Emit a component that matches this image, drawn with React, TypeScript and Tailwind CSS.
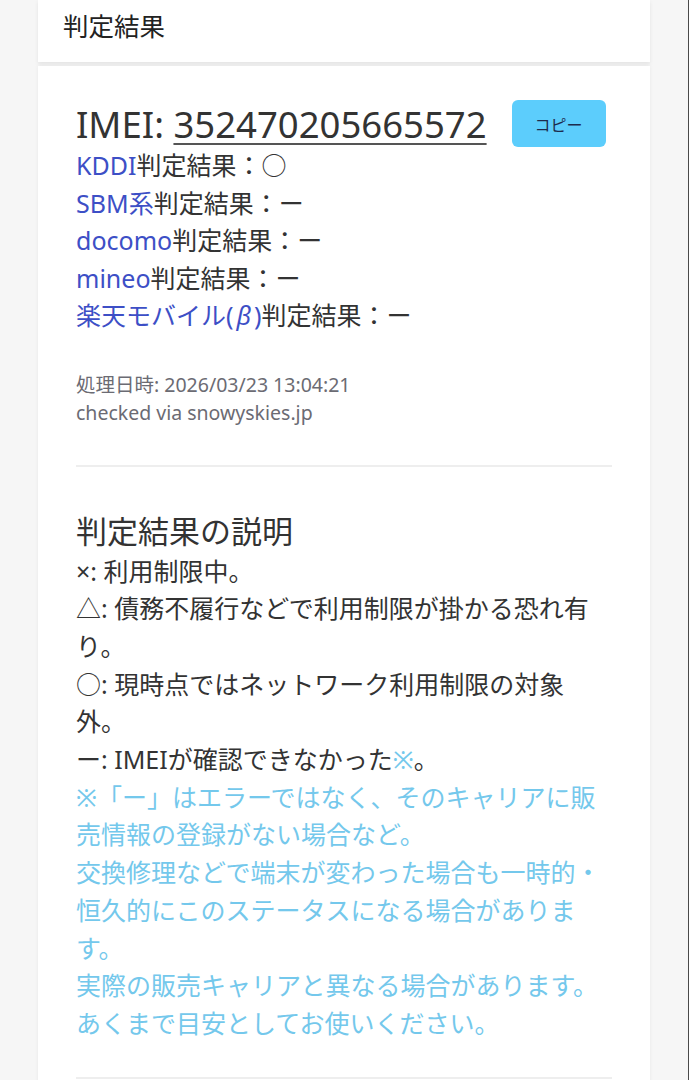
import React from "react";

const carriers = ["KDDI", "SBM系", "docomo", "mineo"];
const results = ["○", "ー", "ー", "ー"];

export default function App() {
  return (
    <div className="min-h-screen w-full bg-[#f6f6f6] border-r border-[#4a4a4a] font-['Noto_Sans','Noto_Sans_CJK_JP',sans-serif] text-[#333]">
      <div className="mx-[38px] flex flex-col gap-[4px]">
        <div className="h-[62px] bg-white shadow-[0_2px_4px_rgba(0,0,0,0.08)] pl-[25px] pt-[7px]">
          <h1 className="text-[25.5px] leading-[36px] font-['Noto_Sans_CJK_JP',sans-serif] font-normal text-[#222]">判定結果</h1>
        </div>
        <div className="bg-white shadow-[0_0_4px_rgba(0,0,0,0.06)] pl-[38px] pr-[38px] pt-[34px] pb-[40px] min-h-[1100px]">
          <div className="flex items-center">
            <div className="text-[36.5px] leading-[44px] text-[#333] whitespace-nowrap">
              IMEI:{" "}
              <span className="underline decoration-[2px] underline-offset-[5px] decoration-[#555]">352470205665572</span>
            </div>
            <button className="ml-[25px] w-[94px] h-[47px] rounded-[6px] bg-[#5ccdfc] text-[16px] text-[#1d2b4d] font-['Noto_Sans_CJK_JP',sans-serif]">
              コピー
            </button>
          </div>
          <div className="text-[25px] leading-[37.5px]">
            {carriers.map((c, i) => (
              <div key={c} className="h-[37.5px] whitespace-nowrap">
                <span className="text-[#3d4fc6]">{c}</span>判定結果：{results[i]}
              </div>
            ))}
            <div className="h-[37.5px] whitespace-nowrap">
              <span className="text-[#3d4fc6]">楽天モバイル(<span className="px-[3px] italic">β</span>)</span>判定結果：ー
            </div>
          </div>
          <div className="mt-[36px] text-[19.5px] leading-[28px] text-[#6b6b73]">
            <div>処理日時: 2026/03/23 13:04:21</div>
            <div>checked via snowyskies.jp</div>
          </div>
          <div className="mt-[38px] h-[2px] bg-[#eeeeee]" />
          <h2 className="mt-[44px] text-[31px] leading-[38px] font-normal text-[#333] font-['Noto_Sans_CJK_JP',sans-serif]">判定結果の説明</h2>
          <div className="mt-[4px] text-[25px] leading-[37.7px] whitespace-nowrap">
            <div>×: 利用制限中。</div>
            <div>△: 債務不履行などで利用制限が掛かる恐れ有<br />り。</div>
            <div>○: 現時点ではネットワーク利用制限の対象<br />外。</div>
            <div>ー: IMEIが確認できなかった<span className="text-[#74c8ec]">※</span>。</div>
            <div className="text-[#74c8ec]">
              ※「ー」はエラーではなく、そのキャリアに販<br />
              売情報の登録がない場合など。<br />
              交換修理などで端末が変わった場合も一時的・<br />
              恒久的にこのステータスになる場合がありま<br />
              す。<br />
              実際の販売キャリアと異なる場合があります。<br />
              あくまで目安としてお使いください。
            </div>
          </div>
          <div className="mt-[34px] h-[2px] bg-[#eeeeee]" />
        </div>
      </div>
    </div>
  );
}
